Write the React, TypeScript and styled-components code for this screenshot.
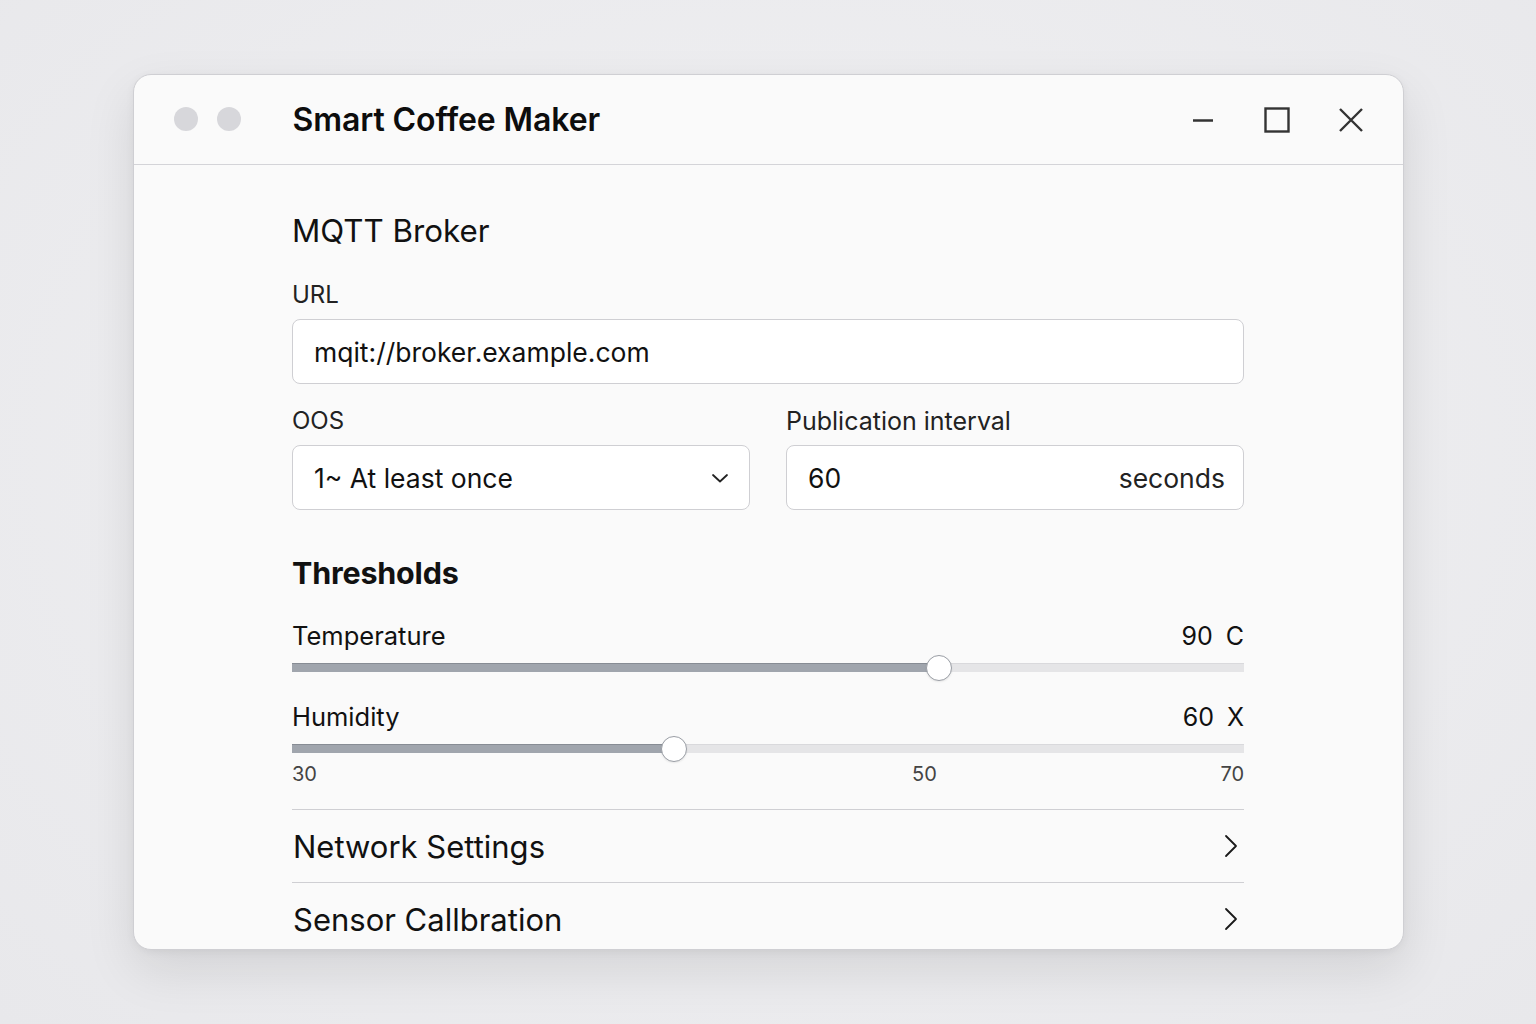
import React from "react";
import styled, { createGlobalStyle } from "styled-components";

const Global = createGlobalStyle`
  html, body { margin: 0; padding: 0; }
  body {
    background: #ebebed;
    font-family: Inter, "Noto Sans", "Liberation Sans", sans-serif;
    color: #111;
    -webkit-font-smoothing: antialiased;
  }
`;

const Page = styled.div`
  width: 1536px;
  height: 1024px;
  display: flex;
  justify-content: center;
  align-items: flex-start;
  padding-top: 74px;
  box-sizing: border-box;
  background: radial-gradient(ellipse at 50% 45%, #f1f1f3 0%, #e8e8eb 100%);
`;

const Window = styled.div`
  width: 1271px;
  height: 876px;
  background: #fafafa;
  border: 1px solid #cfcfd3;
  border-radius: 18px;
  box-sizing: border-box;
  overflow: hidden;
  box-shadow: 0 20px 50px rgba(0, 0, 0, 0.10), 0 2px 8px rgba(0, 0, 0, 0.05);
  display: flex;
  flex-direction: column;
`;

const TitleBar = styled.div`
  height: 90px;
  flex: none;
  border-bottom: 1px solid #d4d4d8;
  box-sizing: border-box;
  display: flex;
  align-items: center;
  padding: 0 38px 0 40px;
`;

const Dots = styled.div`
  display: flex;
  gap: 19px;
  margin-right: 52px;
  margin-top: -2px;
`;

const Dot = styled.span`
  width: 24px;
  height: 24px;
  border-radius: 50%;
  background: #d7d7db;
`;

const Title = styled.h1`
  margin: 0;
  font-size: 32px;
  font-weight: 600;
  letter-spacing: -0.1px;
  color: #0d0d0d;
  flex: 1;
`;

const Controls = styled.div`
  display: flex;
  align-items: center;
  gap: 46px;
`;

const CtrlIcon = styled.svg`
  width: 28px;
  height: 28px;
  display: block;
`;

const Body = styled.div`
  width: 952px;
  margin: 0 auto;
  padding-top: 48px;
  display: flex;
  flex-direction: column;
`;

const SectionTitle = styled.h2<{ $bold?: boolean }>`
  margin: 0;
  font-size: ${(p) => (p.$bold ? "30.5px" : "31.3px")};
  line-height: 36px;
  font-weight: ${(p) => (p.$bold ? 700 : 400)};
  letter-spacing: ${(p) => (p.$bold ? "-0.2px" : "0")};
  color: #111;
`;

const Label = styled.div`
  font-size: 24px;
  line-height: 30px;
  color: #222;
`;

const WideLabel = styled(Label)`
  font-size: 25px;
`;

const Field = styled.div`
  display: flex;
  flex-direction: column;
  gap: 9px;
  flex: 1;
`;

const InputBox = styled.div`
  height: 65px;
  border: 1.5px solid #cfcfd3;
  border-radius: 8px;
  background: #fff;
  box-sizing: border-box;
  display: flex;
  align-items: center;
  padding: 0 18px 0 21px;
  font-size: 26.5px;
  color: #111;
`;

const Grow = styled.span`
  flex: 1;
`;

const Unit = styled.span`
  color: #222;
`;

const Row2 = styled.div`
  display: flex;
  gap: 36px;
  margin-top: 22px;
`;

const SliderBlock = styled.div`
  display: flex;
  flex-direction: column;
`;

const SliderHead = styled.div`
  display: flex;
  justify-content: space-between;
  align-items: center;
  font-size: 25.5px;
  line-height: 30px;
  color: #111;
`;

const Value = styled.span`
  font-size: 25px;
  word-spacing: 6px;
`;

const Track = styled.div`
  position: relative;
  height: 9px;
  background: #e5e5e7;
  border-top: 1px solid #d9d9dc;
  box-sizing: border-box;
  margin-top: 12px;
`;

const Fill = styled.div`
  background: #a0a5ad;
  border-top: 1px solid #878c94;
  box-sizing: border-box;
  margin-top: -1px;
  height: 9px;
`;

const Thumb = styled.div`
  position: absolute;
  top: 50%;
  width: 26px;
  height: 26px;
  border-radius: 50%;
  background: #fff;
  border: 1.5px solid #9a9ea5;
  box-sizing: border-box;
  transform: translate(-50%, -50%);
  box-shadow: 0 1px 2px rgba(0, 0, 0, 0.08);
`;

const Scale = styled.div`
  display: flex;
  justify-content: space-between;
  font-size: 20px;
  color: #444;
  margin-top: 9px;
  position: relative;
  height: 24px;
`;

const ScaleMid = styled.span`
  position: absolute;
  left: 620px;
`;

const NavList = styled.div`
  margin-top: 23px;
`;

const NavRow = styled.div`
  display: flex;
  align-items: center;
  justify-content: space-between;
  height: 72px;
  border-top: 1.5px solid #cfcfd3;
  font-size: 31px;
  color: #111;
  padding-left: 1px;
`;

const Chevron = styled.svg`
  width: 16px;
  height: 26px;
  margin-right: 5px;
`;

function Slider({ label, value, pct }: { label: string; value: string; pct: number }) {
  return (
    <SliderBlock>
      <SliderHead>
        <span>{label}</span>
        <Value>{value}</Value>
      </SliderHead>
      <Track>
        <Fill style={{ width: `${pct}%` }} />
        <Thumb style={{ left: `${pct}%` }} />
      </Track>
    </SliderBlock>
  );
}

const ChevronRight = () => (
  <Chevron viewBox="0 0 16 26" fill="none" stroke="#1a1a1a" strokeWidth="1.8" strokeLinecap="round" strokeLinejoin="round">
    <path d="M3 3 L13 13 L3 23" />
  </Chevron>
);

export default function App() {
  return (
    <>
      <Global />
      <Page>
        <Window>
          <TitleBar>
            <Dots>
              <Dot />
              <Dot />
            </Dots>
            <Title>Smart Coffee Maker</Title>
            <Controls>
              <CtrlIcon viewBox="0 0 28 28">
                <path d="M4 14.5 H24" stroke="#333" strokeWidth="2.4" />
              </CtrlIcon>
              <CtrlIcon viewBox="0 0 28 28">
                <rect x="2.5" y="2.5" width="23" height="23" fill="none" stroke="#333" strokeWidth="2.4" />
              </CtrlIcon>
              <CtrlIcon viewBox="0 0 28 28">
                <path d="M3 3 L25 25 M25 3 L3 25" stroke="#333" strokeWidth="2.4" />
              </CtrlIcon>
            </Controls>
          </TitleBar>
          <Body>
            <SectionTitle>MQTT Broker</SectionTitle>
            <Field style={{ marginTop: 31 }}>
              <Label>URL</Label>
              <InputBox>mqit://broker.example.com</InputBox>
            </Field>
            <Row2>
              <Field>
                <Label>OOS</Label>
                <InputBox>
                  <Grow>1~ At least once</Grow>
                  <svg width="18" height="12" viewBox="0 0 18 12" fill="none" stroke="#222" strokeWidth="1.8" strokeLinecap="round" strokeLinejoin="round" style={{ marginRight: 2 }}>
                    <path d="M2 3 L9 9.5 L16 3" />
                  </svg>
                </InputBox>
              </Field>
              <Field>
                <WideLabel>Publication interval</WideLabel>
                <InputBox>
                  <Grow>60</Grow>
                  <Unit>seconds</Unit>
                </InputBox>
              </Field>
            </Row2>
            <div style={{ marginTop: 45 }}>
              <SectionTitle $bold>Thresholds</SectionTitle>
            </div>
            <div style={{ marginTop: 30 }}>
              <Slider label="Temperature" value="90 C" pct={68} />
            </div>
            <div style={{ marginTop: 30 }}>
              <Slider label="Humidity" value="60 X" pct={40.1} />
            </div>
            <Scale>
              <span>30</span>
              <ScaleMid>50</ScaleMid>
              <span>70</span>
            </Scale>
            <NavList>
              <NavRow>
                <span>Network Settings</span>
                <ChevronRight />
              </NavRow>
              <NavRow>
                <span>Sensor Callbration</span>
                <ChevronRight />
              </NavRow>
            </NavList>
          </Body>
        </Window>
      </Page>
    </>
  );
}
